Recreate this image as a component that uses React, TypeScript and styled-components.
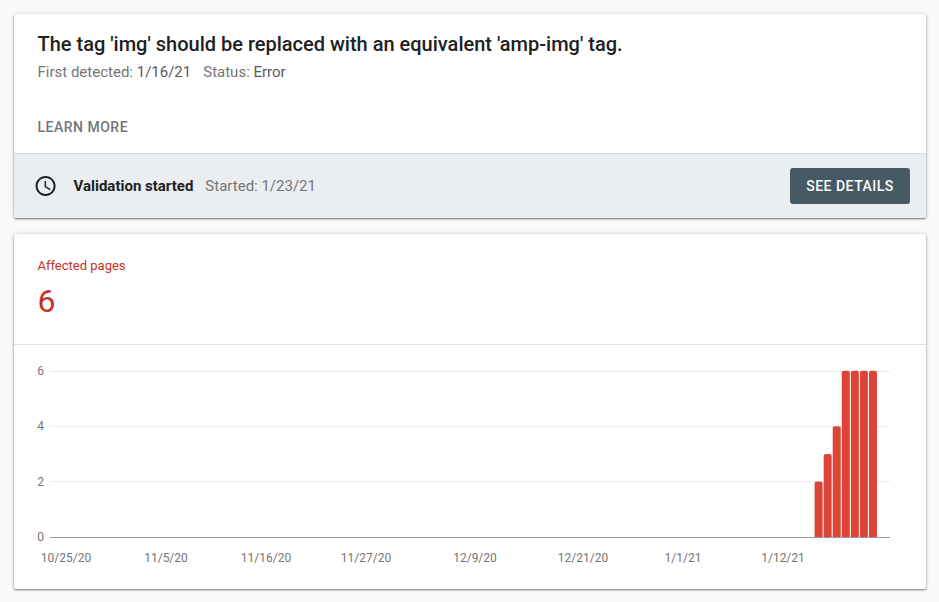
import React from "react";
import styled, { createGlobalStyle } from "styled-components";

const GlobalStyle = createGlobalStyle`
  * { box-sizing: border-box; }
  body {
    margin: 0;
    background: #fafafa;
    font-family: Roboto, "Liberation Sans", sans-serif;
    color: #212121;
  }
`;

const Page = styled.main`
  display: flex;
  flex-direction: column;
  gap: 16px;
  width: 939px;
  height: 602px;
  padding: 14px 13px 13px 14px;
  overflow: hidden;
`;

const Card = styled.section<{ $height: number }>`
  flex: none;
  height: ${(p) => p.$height}px;
  background: #fff;
  border-radius: 2px;
  overflow: hidden;
  box-shadow: 0 1px 2px rgba(0, 0, 0, 0.48), 0 0 4px rgba(0, 0, 0, 0.16);
`;

const IssueSummary = styled.div`
  display: flex;
  flex-direction: column;
  align-items: flex-start;
  height: 139px;
  padding: 16px 23.5px 0;
`;

const Title = styled.h1`
  margin: 0;
  font-size: 20px;
  font-weight: 500;
  line-height: 28px;
  white-space: nowrap;
`;

const Meta = styled.div`
  display: flex;
  gap: 12px;
  margin-top: 4px;
  font-size: 15px;
  line-height: 20px;
  color: #757575;
`;

const MetaValue = styled.span`
  color: #5a5a5a;
`;

const LearnMore = styled.button`
  margin: 35px 0 0;
  padding: 0;
  border: 0;
  background: none;
  font: 500 14px/20px Roboto, sans-serif;
  letter-spacing: 0.5px;
  color: #757575;
`;

const ValidationBar = styled.div`
  display: flex;
  align-items: center;
  height: 65px;
  padding: 0 16px 0 19.5px;
  border-top: 1px solid #d7dadb;
  background: #eaeef1;
`;

const ClockIcon = styled.svg`
  width: 24px;
  height: 24px;
  fill: #212121;
`;

const ValidationState = styled.span`
  margin-left: 16px;
  font-size: 15px;
  font-weight: 700;
`;

const StartedDate = styled.span`
  margin-left: 12px;
  font-size: 15px;
  color: #757575;
`;

const DetailsButton = styled.button`
  width: 120px;
  height: 36px;
  margin-left: auto;
  padding: 0;
  border: 0;
  border-radius: 3px;
  background: #455a64;
  color: #fff;
  font: 500 14px/36px Roboto, sans-serif;
  letter-spacing: 0.5px;
`;

const Metric = styled.div`
  height: 111px;
  padding: 24px 23.5px 0;
  border-bottom: 1px solid #e0e0e0;
  color: #c5321f;
`;

const MetricLabel = styled.div`
  font-size: 13px;
  line-height: 16px;
`;

const MetricValue = styled.div`
  margin-top: 8px;
  font-size: 32px;
  line-height: 38px;
`;

const Chart = styled.svg`
  display: block;
  width: 912px;
  height: 244px;
  font-family: Roboto, sans-serif;
  font-size: 12px;
  fill: #757575;
`;

const ticks = [
  { value: 6, y: 26.5 },
  { value: 4, y: 81.5 },
  { value: 2, y: 136.5 },
];

const dates = [
  { label: "10/25/20", x: 52 },
  { label: "11/5/20", x: 152 },
  { label: "11/16/20", x: 252 },
  { label: "11/27/20", x: 352 },
  { label: "12/9/20", x: 461 },
  { label: "12/21/20", x: 569 },
  { label: "1/1/21", x: 669 },
  { label: "1/12/21", x: 769 },
];

const affected = [2, 3, 4, 6, 6, 6, 6];
const BASELINE = 192;

function barPath(value: number, index: number) {
  const left = 800.6 + index * 9.06;
  const right = left + 8;
  const top = BASELINE - value * 27.7;
  return `M${left} ${BASELINE}V${top + 2}q0-2 2-2H${right - 2}q2 0 2 2V${BASELINE}Z`;
}

function AffectedPagesChart() {
  return (
    <Chart viewBox="0 0 912 244" role="img" aria-label="Affected pages">
      {ticks.map((t) => (
        <g key={t.value}>
          <path d={`M36 ${t.y}H876`} stroke="#ebebeb" />
          <text x="30" y={t.value === 2 ? 141 : t.y + 3.5} textAnchor="end">{t.value}</text>
        </g>
      ))}
      <text x="30" y="196" textAnchor="end">0</text>
      {affected.map((value, i) => (
        <path key={i} d={barPath(value, i)} fill="#db4437" />
      ))}
      <path d="M36 192.5H876" stroke="#9a9a9a" />
      {dates.map((d) => (
        <text key={d.label} x={d.x} y="217" textAnchor="middle">{d.label}</text>
      ))}
    </Chart>
  );
}

export default function App() {
  return (
    <>
      <GlobalStyle />
      <Page>
        <Card $height={204}>
          <IssueSummary>
            <Title>The tag 'img' should be replaced with an equivalent 'amp-img' tag.</Title>
            <Meta>
              <span>First detected: <MetaValue>1/16/21</MetaValue></span>
              <span>Status: <MetaValue>Error</MetaValue></span>
            </Meta>
            <LearnMore>LEARN MORE</LearnMore>
          </IssueSummary>
          <ValidationBar>
            <ClockIcon viewBox="0.4 0 24 24" aria-hidden="true">
              <path d="M11.99 2C6.47 2 2 6.48 2 12s4.47 10 9.99 10C17.52 22 22 17.52 22 12S17.52 2 11.99 2zM12 20c-4.42 0-8-3.58-8-8s3.58-8 8-8 8 3.58 8 8-3.58 8-8 8zM12.5 7H11v6l5.25 3.15.75-1.23-4.5-2.67z" />
            </ClockIcon>
            <ValidationState>Validation started</ValidationState>
            <StartedDate>Started: 1/23/21</StartedDate>
            <DetailsButton>SEE DETAILS</DetailsButton>
          </ValidationBar>
        </Card>
        <Card $height={355}>
          <Metric>
            <MetricLabel>Affected pages</MetricLabel>
            <MetricValue>6</MetricValue>
          </Metric>
          <AffectedPagesChart />
        </Card>
      </Page>
    </>
  );
}
